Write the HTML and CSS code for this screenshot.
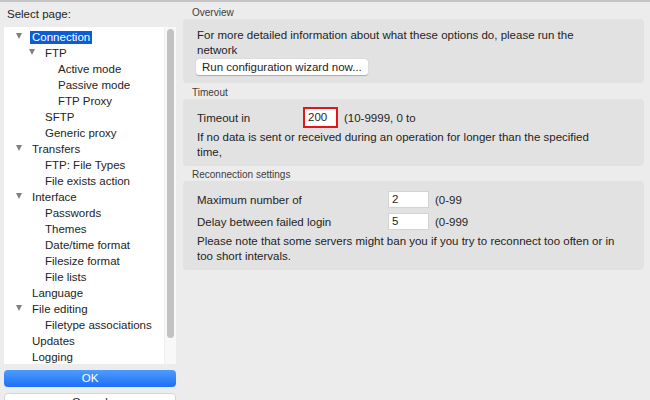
FILE: index.html
```html
<!DOCTYPE html>
<html>
<head>
<meta charset="utf-8">
<link rel="stylesheet" href="styles.css">
</head>
<body>
<div class="window">
  <div class="left">
    <div class="select-label">Select page:</div>
    <div class="tree">
      <div class="tree-list">
        <div class="row l0"><span class="tog open"></span><span class="txt sel">Connection</span></div>
        <div class="row l1"><span class="tog open"></span><span class="txt">FTP</span></div>
        <div class="row l2"><span class="tog"></span><span class="txt">Active mode</span></div>
        <div class="row l2"><span class="tog"></span><span class="txt">Passive mode</span></div>
        <div class="row l2"><span class="tog"></span><span class="txt">FTP Proxy</span></div>
        <div class="row l1"><span class="tog"></span><span class="txt">SFTP</span></div>
        <div class="row l1"><span class="tog"></span><span class="txt">Generic proxy</span></div>
        <div class="row l0"><span class="tog open"></span><span class="txt">Transfers</span></div>
        <div class="row l1"><span class="tog"></span><span class="txt">FTP: File Types</span></div>
        <div class="row l1"><span class="tog"></span><span class="txt">File exists action</span></div>
        <div class="row l0"><span class="tog open"></span><span class="txt">Interface</span></div>
        <div class="row l1"><span class="tog"></span><span class="txt">Passwords</span></div>
        <div class="row l1"><span class="tog"></span><span class="txt">Themes</span></div>
        <div class="row l1"><span class="tog"></span><span class="txt">Date/time format</span></div>
        <div class="row l1"><span class="tog"></span><span class="txt">Filesize format</span></div>
        <div class="row l1"><span class="tog"></span><span class="txt">File lists</span></div>
        <div class="row l0"><span class="tog"></span><span class="txt">Language</span></div>
        <div class="row l0"><span class="tog open"></span><span class="txt">File editing</span></div>
        <div class="row l1"><span class="tog"></span><span class="txt">Filetype associations</span></div>
        <div class="row l0"><span class="tog"></span><span class="txt">Updates</span></div>
        <div class="row l0"><span class="tog"></span><span class="txt">Logging</span></div>
      </div>
      <div class="scroll"><div class="thumb"></div></div>
    </div>
    <div class="btn ok">OK</div>
    <div class="btn cancel">Cancel</div>
  </div>

  <div class="right">
    <div class="sec-label first">Overview</div>
    <div class="box overview">
      <div class="para">For more detailed information about what these options do, please run the<br>network</div>
      <div class="wizard">Run configuration wizard now...</div>
    </div>

    <div class="sec-label timeout-label">Timeout</div>
    <div class="box timeout">
      <div class="field-row tall">
        <span class="flabel w106">Timeout in</span>
        <span class="input red">200</span>
        <span class="hint">(10-9999, 0 to</span>
      </div>
      <div class="para mt3">If no data is sent or received during an operation for longer than the specified<br>time,</div>
    </div>

    <div class="sec-label recon-label">Reconnection settings</div>
    <div class="box recon">
      <div class="field-row">
        <span class="flabel w191">Maximum number of</span>
        <span class="input">2</span>
        <span class="hint">(0-99</span>
      </div>
      <div class="field-row gap">
        <span class="flabel w191">Delay between failed login</span>
        <span class="input">5</span>
        <span class="hint">(0-999</span>
      </div>
      <div class="para mt4">Please note that some servers might ban you if you try to reconnect too often or in<br>too short intervals.</div>
    </div>
  </div>
</div>
</body>
</html>
```

FILE: styles.css
```css
html, body {
  margin: 0;
  padding: 0;
  background: #ececec;
  overflow: hidden;
}
body {
  font-family: "Liberation Sans", Arial, sans-serif;
  font-size: 11.5px;
  color: #242424;
}
.window {
  border-top: 2px solid #c4c4c4;
  display: flex;
  align-items: flex-start;
  height: 398px;
  padding-left: 4px;
}

/* left column */
.left {
  width: 172px;
  display: flex;
  flex-direction: column;
}
.select-label {
  height: 25px;
  line-height: 25px;
  padding-left: 3px;
}
.tree {
  height: 337px;
  background: #ffffff;
  display: flex;
}
.tree-list {
  flex: 1;
  padding-top: 2px;
}
.row {
  height: 16px;
  display: flex;
  align-items: center;
  white-space: nowrap;
}
.row.l0 { padding-left: 8px; }
.row.l1 { padding-left: 21px; }
.row.l2 { padding-left: 34px; }
.tog {
  width: 14px;
  height: 16px;
  display: flex;
  align-items: center;
  justify-content: center;
  flex: none;
}
.tog.open::before {
  content: "";
  width: 0;
  height: 0;
  border-left: 3.5px solid transparent;
  border-right: 3.5px solid transparent;
  border-top: 6px solid #808080;
  margin-top: -3px;
}
.txt {
  margin-left: 4px;
  padding: 0 2px;
  height: 13px;
  line-height: 13px;
}
.txt.sel {
  background: #0b5cd5;
  color: #ffffff;
}
.scroll {
  width: 11px;
  background: #f8f8f8;
  border-left: 1px solid #efefef;
  display: flex;
  justify-content: center;
  padding-top: 2px;
}
.thumb {
  width: 7px;
  height: 309px;
  background: #c2c2c2;
  border-radius: 4px;
}
.btn {
  height: 17px;
  line-height: 17px;
  text-align: center;
  border-radius: 4px;
  font-size: 11.5px;
}
.ok {
  margin-top: 6px;
  color: #ffffff;
  background: linear-gradient(#4d9cfd, #1e6ff6);
}
.cancel {
  margin-top: 6px;
  background: #ffffff;
  border: 1px solid #d6d6d6;
  height: 16px;
  line-height: 16px;
}

/* right column */
.right {
  margin-left: 7px;
  width: 461px;
}
.sec-label {
  font-size: 10px;
  color: #3c3c3c;
  line-height: 12px;
  padding-left: 9px;
}
.sec-label.first { padding-top: 5px; }
.timeout-label { padding-top: 4px; }
.recon-label { padding-top: 3px; }
.box {
  background: #e2e2e2;
  border-radius: 4px;
  padding-left: 14px;
  padding-right: 10px;
}
.para {
  line-height: 15px;
  white-space: nowrap;
}
.overview {
  height: 64px;
  box-sizing: border-box;
  padding-top: 9px;
}
.wizard {
  display: inline-block;
  margin-top: 1px;
  margin-left: -1px;
  height: 16px;
  line-height: 16px;
  padding: 0 6px;
  background: #ffffff;
  border-radius: 3px;
  box-shadow: 0 0.5px 1px rgba(0,0,0,0.25);
}
.timeout {
  height: 67px;
  box-sizing: border-box;
  padding-top: 8px;
}
.recon {
  height: 89px;
  box-sizing: border-box;
  padding-top: 10px;
}
.field-row {
  display: flex;
  align-items: center;
  height: 17px;
  white-space: nowrap;
}
.field-row.tall { height: 21px; }
.field-row.gap { margin-top: 5px; }
.flabel { flex: none; }
.w106 { width: 106px; }
.w191 { width: 191px; }
.input {
  box-sizing: border-box;
  width: 41px;
  height: 17px;
  line-height: 15px;
  background: #ffffff;
  border: 1px solid #d3d3d3;
  padding-left: 3px;
  flex: none;
}
.input.red {
  width: 35px;
  height: 21px;
  line-height: 17px;
  border: 2px solid #e3141b;
  padding-left: 3px;
}
.hint { margin-left: 6px; }
.mt3 { margin-top: 2px; }
.mt4 { margin-top: 4px; }
```
